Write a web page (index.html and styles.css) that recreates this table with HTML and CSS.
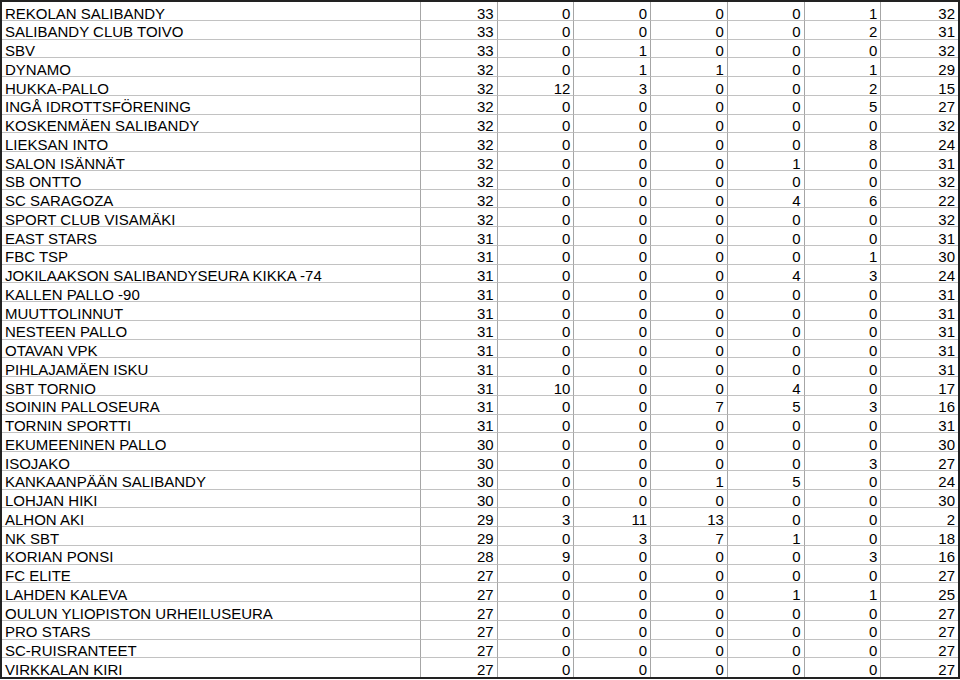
FILE: index.html
```html
<!DOCTYPE html>
<html lang="fi">
<head>
<meta charset="utf-8">
<link rel="stylesheet" href="styles.css">
</head>
<body>
<div class="sheet">
<div class="c n">REKOLAN SALIBANDY</div><div class="c">33</div><div class="c">0</div><div class="c">0</div><div class="c">0</div><div class="c">0</div><div class="c">1</div><div class="c">32</div>
<div class="c n">SALIBANDY CLUB TOIVO</div><div class="c">33</div><div class="c">0</div><div class="c">0</div><div class="c">0</div><div class="c">0</div><div class="c">2</div><div class="c">31</div>
<div class="c n">SBV</div><div class="c">33</div><div class="c">0</div><div class="c">1</div><div class="c">0</div><div class="c">0</div><div class="c">0</div><div class="c">32</div>
<div class="c n">DYNAMO</div><div class="c">32</div><div class="c">0</div><div class="c">1</div><div class="c">1</div><div class="c">0</div><div class="c">1</div><div class="c">29</div>
<div class="c n">HUKKA-PALLO</div><div class="c">32</div><div class="c">12</div><div class="c">3</div><div class="c">0</div><div class="c">0</div><div class="c">2</div><div class="c">15</div>
<div class="c n">INGÅ IDROTTSFÖRENING</div><div class="c">32</div><div class="c">0</div><div class="c">0</div><div class="c">0</div><div class="c">0</div><div class="c">5</div><div class="c">27</div>
<div class="c n">KOSKENMÄEN SALIBANDY</div><div class="c">32</div><div class="c">0</div><div class="c">0</div><div class="c">0</div><div class="c">0</div><div class="c">0</div><div class="c">32</div>
<div class="c n">LIEKSAN INTO</div><div class="c">32</div><div class="c">0</div><div class="c">0</div><div class="c">0</div><div class="c">0</div><div class="c">8</div><div class="c">24</div>
<div class="c n">SALON ISÄNNÄT</div><div class="c">32</div><div class="c">0</div><div class="c">0</div><div class="c">0</div><div class="c">1</div><div class="c">0</div><div class="c">31</div>
<div class="c n">SB ONTTO</div><div class="c">32</div><div class="c">0</div><div class="c">0</div><div class="c">0</div><div class="c">0</div><div class="c">0</div><div class="c">32</div>
<div class="c n">SC SARAGOZA</div><div class="c">32</div><div class="c">0</div><div class="c">0</div><div class="c">0</div><div class="c">4</div><div class="c">6</div><div class="c">22</div>
<div class="c n">SPORT CLUB VISAMÄKI</div><div class="c">32</div><div class="c">0</div><div class="c">0</div><div class="c">0</div><div class="c">0</div><div class="c">0</div><div class="c">32</div>
<div class="c n">EAST STARS</div><div class="c">31</div><div class="c">0</div><div class="c">0</div><div class="c">0</div><div class="c">0</div><div class="c">0</div><div class="c">31</div>
<div class="c n">FBC TSP</div><div class="c">31</div><div class="c">0</div><div class="c">0</div><div class="c">0</div><div class="c">0</div><div class="c">1</div><div class="c">30</div>
<div class="c n">JOKILAAKSON SALIBANDYSEURA KIKKA -74</div><div class="c">31</div><div class="c">0</div><div class="c">0</div><div class="c">0</div><div class="c">4</div><div class="c">3</div><div class="c">24</div>
<div class="c n">KALLEN PALLO -90</div><div class="c">31</div><div class="c">0</div><div class="c">0</div><div class="c">0</div><div class="c">0</div><div class="c">0</div><div class="c">31</div>
<div class="c n">MUUTTOLINNUT</div><div class="c">31</div><div class="c">0</div><div class="c">0</div><div class="c">0</div><div class="c">0</div><div class="c">0</div><div class="c">31</div>
<div class="c n">NESTEEN PALLO</div><div class="c">31</div><div class="c">0</div><div class="c">0</div><div class="c">0</div><div class="c">0</div><div class="c">0</div><div class="c">31</div>
<div class="c n">OTAVAN VPK</div><div class="c">31</div><div class="c">0</div><div class="c">0</div><div class="c">0</div><div class="c">0</div><div class="c">0</div><div class="c">31</div>
<div class="c n">PIHLAJAMÄEN ISKU</div><div class="c">31</div><div class="c">0</div><div class="c">0</div><div class="c">0</div><div class="c">0</div><div class="c">0</div><div class="c">31</div>
<div class="c n">SBT TORNIO</div><div class="c">31</div><div class="c">10</div><div class="c">0</div><div class="c">0</div><div class="c">4</div><div class="c">0</div><div class="c">17</div>
<div class="c n">SOININ PALLOSEURA</div><div class="c">31</div><div class="c">0</div><div class="c">0</div><div class="c">7</div><div class="c">5</div><div class="c">3</div><div class="c">16</div>
<div class="c n">TORNIN SPORTTI</div><div class="c">31</div><div class="c">0</div><div class="c">0</div><div class="c">0</div><div class="c">0</div><div class="c">0</div><div class="c">31</div>
<div class="c n">EKUMEENINEN PALLO</div><div class="c">30</div><div class="c">0</div><div class="c">0</div><div class="c">0</div><div class="c">0</div><div class="c">0</div><div class="c">30</div>
<div class="c n">ISOJAKO</div><div class="c">30</div><div class="c">0</div><div class="c">0</div><div class="c">0</div><div class="c">0</div><div class="c">3</div><div class="c">27</div>
<div class="c n">KANKAANPÄÄN SALIBANDY</div><div class="c">30</div><div class="c">0</div><div class="c">0</div><div class="c">1</div><div class="c">5</div><div class="c">0</div><div class="c">24</div>
<div class="c n">LOHJAN HIKI</div><div class="c">30</div><div class="c">0</div><div class="c">0</div><div class="c">0</div><div class="c">0</div><div class="c">0</div><div class="c">30</div>
<div class="c n">ALHON AKI</div><div class="c">29</div><div class="c">3</div><div class="c">11</div><div class="c">13</div><div class="c">0</div><div class="c">0</div><div class="c">2</div>
<div class="c n">NK SBT</div><div class="c">29</div><div class="c">0</div><div class="c">3</div><div class="c">7</div><div class="c">1</div><div class="c">0</div><div class="c">18</div>
<div class="c n">KORIAN PONSI</div><div class="c">28</div><div class="c">9</div><div class="c">0</div><div class="c">0</div><div class="c">0</div><div class="c">3</div><div class="c">16</div>
<div class="c n">FC ELITE</div><div class="c">27</div><div class="c">0</div><div class="c">0</div><div class="c">0</div><div class="c">0</div><div class="c">0</div><div class="c">27</div>
<div class="c n">LAHDEN KALEVA</div><div class="c">27</div><div class="c">0</div><div class="c">0</div><div class="c">0</div><div class="c">1</div><div class="c">1</div><div class="c">25</div>
<div class="c n">OULUN YLIOPISTON URHEILUSEURA</div><div class="c">27</div><div class="c">0</div><div class="c">0</div><div class="c">0</div><div class="c">0</div><div class="c">0</div><div class="c">27</div>
<div class="c n">PRO STARS</div><div class="c">27</div><div class="c">0</div><div class="c">0</div><div class="c">0</div><div class="c">0</div><div class="c">0</div><div class="c">27</div>
<div class="c n">SC-RUISRANTEET</div><div class="c">27</div><div class="c">0</div><div class="c">0</div><div class="c">0</div><div class="c">0</div><div class="c">0</div><div class="c">27</div>
<div class="c n">VIRKKALAN KIRI</div><div class="c">27</div><div class="c">0</div><div class="c">0</div><div class="c">0</div><div class="c">0</div><div class="c">0</div><div class="c">27</div>
</div>
</body>
</html>
```
FILE: styles.css
```css
html, body {
  margin: 0;
  padding: 0;
  background: #fff;
}
.sheet {
  box-sizing: border-box;
  width: 960px;
  height: 679px;
  border: 2px solid #222;
  display: grid;
  grid-template-columns: 419px repeat(7, 1fr);
  grid-auto-rows: 18.75px;
  font-family: "Liberation Sans", Arial, sans-serif;
  font-size: 15px;
  color: #000;
}
.c {
  box-sizing: border-box;
  border-right: 1px solid #a6a6a6;
  border-bottom: 1px solid #c2c2c2;
  padding: 2.7px 3px 0 0;
  line-height: 17px;
  text-align: right;
  white-space: nowrap;
  overflow: hidden;
}
.c.n {
  text-align: left;
  padding-left: 3px;
  padding-right: 0;
}
.c:nth-child(8n) {
  border-right: none;
}
.c:nth-last-child(-n+8) {
  border-bottom: none;
}
```
